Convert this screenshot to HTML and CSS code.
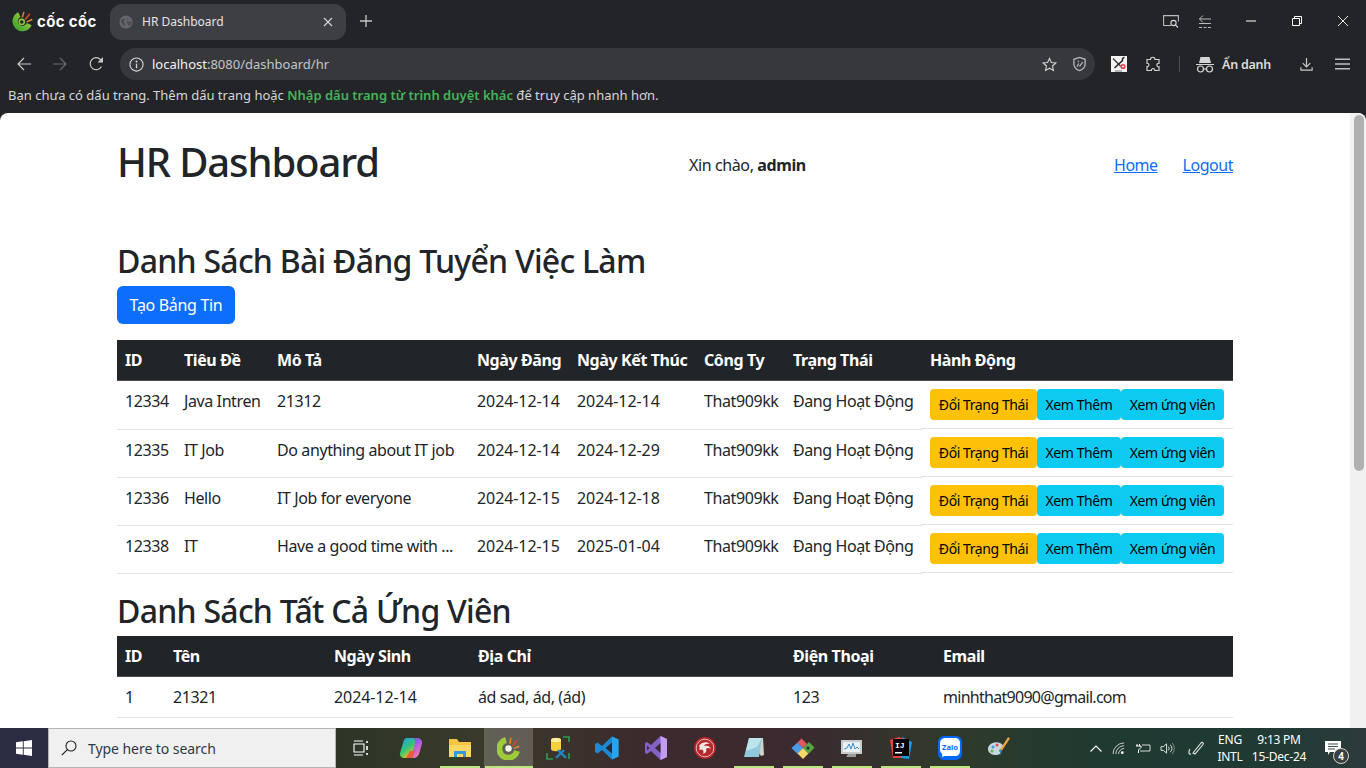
FILE: index.html
```html
<!DOCTYPE html>
<html lang="vi">
<head>
<meta charset="utf-8">
<title>HR Dashboard</title>
<link rel="stylesheet" href="styles.css">
</head>
<body>
<div class="browser">
  <div class="tabstrip">
    <div class="brand">
      <svg class="brand-logo" viewBox="0 0 20 20"><defs><linearGradient id="lg" x1="0" y1="1" x2="1" y2="0"><stop offset="0" stop-color="#3fa535"/><stop offset="1" stop-color="#a9cf38"/></linearGradient></defs><path d="M16.400 12.500A7 7 0 1 1 7 3.400" fill="none" stroke="url(#lg)" stroke-width="5"/><circle cx="9.300" cy="10.400" r="2.400" fill="none" stroke="#8cc63f" stroke-width="1.500"/><path d="M9 6 10.700.8l1.300.5L10.500 6.500z" fill="#e8792b"/><path d="M12 7.500 16.500 2.200l1 1-4.300 5.300z" fill="#d9472b"/><path d="M13.500 10 19 7.400l.6 1.300-5.500 2.300z" fill="#ef8a2c"/></svg>
      <span class="brand-name">cốc cốc</span>
    </div>
    <div class="tab">
      <svg class="tab-globe" viewBox="0 0 16 16"><circle cx="8" cy="8" r="7.500" fill="#65666a"/><path d="M3 4.500 6 4l1 2-2 2 2 2v3L5 12 2 8zM10 2l1 2.500-2 1 1 2 3-.5 1.500 1.500-1.500 3-2 1.500-.5-3-2-1 .5-2.500z" fill="#4c4d51"/></svg>
      <span class="tab-title">HR Dashboard</span>
      <svg class="tab-close" viewBox="0 0 10 10"><path d="M1 1l8 8M9 1l-8 8" stroke="#d5d6d8" stroke-width="1.100"/></svg>
    </div>
    <svg class="newtab" viewBox="0 0 12 12"><path d="M6 0v12M0 6h12" stroke="#c4c5c8" stroke-width="1.300"/></svg>
    <div class="spacer"></div>
    <svg class="win-a" viewBox="0 0 16 13"><path d="M8 10.500H.6V.6h14.800v6" fill="none" stroke="#b9babd" stroke-width="1.100"/><circle cx="10.500" cy="8" r="2.600" fill="none" stroke="#d8d9db" stroke-width="1.100"/><path d="M12.500 10 15 12.500" stroke="#d8d9db" stroke-width="1.100"/></svg>
    <svg class="win-b" viewBox="0 0 14 13"><path d="M13 4H1.500M5 .5 1.500 4 5 7.500" fill="none" stroke="#b9babd" stroke-width="1"/><path d="M1 8.500h12M1 12.500h3M5.500 12.500h3M10 12.500h3" stroke="#b9babd" stroke-width="1"/></svg>
    <svg class="win-min" viewBox="0 0 10 10"><path d="M0 5h10" stroke="#fff" stroke-width="1"/></svg>
    <svg class="win-max" viewBox="0 0 10 10"><path d="M.5 2.500h7v7h-7zM2.500 2.500v-2h7v7h-2" fill="none" stroke="#fff" stroke-width="1"/></svg>
    <svg class="win-close" viewBox="0 0 10 10"><path d="M0 0l10 10M10 0 0 10" stroke="#fff" stroke-width=".9"/></svg>
  </div>
  <div class="toolbar">
    <svg class="tb" viewBox="0 0 16 16"><path d="M15 8H2M8 2 2 8l6 6" fill="none" stroke="#c8c9cb" stroke-width="1.200"/></svg>
    <svg class="tb" viewBox="0 0 16 16"><path d="M1 8h13M8 2l6 6-6 6" fill="none" stroke="#6a6b6e" stroke-width="1.200"/></svg>
    <svg class="tb" viewBox="0 0 16 16"><path d="M13.500 10.500A6 6 0 1 1 12.500 3.500L14.500 5.500" fill="none" stroke="#c8c9cb" stroke-width="1.200"/><path d="M15 1v5.500H9.500z" fill="#c8c9cb"/></svg>
    <div class="omnibox">
      <svg class="omni-info" viewBox="0 0 16 16"><circle cx="8" cy="8" r="7" fill="none" stroke="#d5d6d8" stroke-width="1.200"/><path d="M8 7v5" stroke="#d5d6d8" stroke-width="1.400"/><circle cx="8" cy="4.800" r="1" fill="#d5d6d8"/></svg>
      <span class="url"><span class="url-host">localhost</span>:8080/dashboard/hr</span>
      <div class="spacer"></div>
      <svg class="omni-star" viewBox="0 0 16 16"><path d="M8 1.500l2 4.400 4.700.5-3.500 3.200 1 4.700L8 11.900l-4.200 2.400 1-4.700L1.300 6.400 6 5.900z" fill="none" stroke="#cfd0d2" stroke-width="1.200"/></svg>
      <svg class="omni-shield" viewBox="0 0 16 16"><path d="M8 1l6 2v5c0 3.500-2.500 5.800-6 7-3.500-1.200-6-3.500-6-7V3z" fill="none" stroke="#b4b5b8" stroke-width="1.400"/><path d="M5.500 11 7 7.500M8 10.500l3.500-4.500M7 6l-.5-1.500" stroke="#b4b5b8" stroke-width="1.300"/></svg>
    </div>
    <svg class="ext-tools" viewBox="0 0 16 16"><rect width="16" height="16" fill="#f4f4f4"/><path d="M2 2.500l7.500 7.500" stroke="#333" stroke-width="1.200"/><path d="M13.500 1.500c-1.500 0-2.500 1.500-2 3L3.500 12" stroke="#222" stroke-width="1.500" fill="none"/><circle cx="12" cy="10.500" r="2.600" fill="#e8384f"/><circle cx="12" cy="10.500" r="1" fill="#fff"/><path d="M4 15h7" stroke="#777" stroke-width="1"/></svg>
    <svg class="ext-puzzle" viewBox="0 0 16 16"><path d="M5.500 3.500C5.500 .5 10 .5 10 3.500h4v3.800c-2.800-.5-2.800 4 0 3.500v3.700H9.800c.5-2.400-3.900-2.400-3.400 0H2v-4c2.500.5 2.500-3.600 0-3.200V3.500z" fill="none" stroke="#cfd0d2" stroke-width="1.200"/></svg>
    <div class="tb-sep"></div>
    <svg class="incog" viewBox="0 0 18 18"><path d="M3 8l1.500-6h9L15 8zM0 9h18v1H0z" fill="#d4d5d7"/><circle cx="4.500" cy="14" r="3" fill="none" stroke="#d4d5d7" stroke-width="1.200"/><circle cx="13.500" cy="14" r="3" fill="none" stroke="#d4d5d7" stroke-width="1.200"/><path d="M7.500 14h3" stroke="#d4d5d7" stroke-width="1.200"/></svg>
    <span class="incog-label">Ẩn danh</span>
    <svg class="tb-dl" viewBox="0 0 16 16"><path d="M8 1v9M4 6.500 8 10.500l4-4" fill="none" stroke="#c8c9cb" stroke-width="1.300"/><path d="M2 11v3h12v-3" fill="none" stroke="#c8c9cb" stroke-width="1.200"/></svg>
    <svg class="tb-menu" viewBox="0 0 16 12"><path d="M0 1h16M0 6h16M0 11h16" stroke="#bdbec1" stroke-width="1.500"/></svg>
  </div>
  <div class="bookmarks">Bạn chưa có dấu trang. Thêm dấu trang hoặc <span class="bm-link">Nhập dấu trang từ trình duyệt khác</span> để truy cập nhanh hơn.</div>

  <div class="viewport">
    <main class="page">
      <header class="page-head">
        <h1>HR Dashboard</h1>
        <div class="greeting">Xin chào, <strong>admin</strong></div>
        <nav class="page-nav"><a href="#">Home</a><a href="#">Logout</a></nav>
      </header>

      <h2>Danh Sách Bài Đăng Tuyển Việc Làm</h2>
      <a class="btn btn-create" href="#">Tạo Bảng Tin</a>

      <table class="table jobs">
        <colgroup><col class="p1"><col class="p2"><col class="p3"><col class="p4"><col class="p5"><col class="p6"><col class="p7"><col class="p8"></colgroup>
        <thead><tr><th>ID</th><th>Tiêu Đề</th><th>Mô Tả</th><th>Ngày Đăng</th><th>Ngày Kết Thúc</th><th>Công Ty</th><th>Trạng Thái</th><th>Hành Động</th></tr></thead>
        <tbody>
          <tr><td>12334</td><td>Java Intren</td><td>21312</td><td>2024-12-14</td><td>2024-12-14</td><td>That909kk</td><td>Đang Hoạt Động</td><td class="actions"><a class="btn-sm warn" href="#">Đổi Trạng Thái</a><a class="btn-sm info more" href="#">Xem Thêm</a><a class="btn-sm info apps" href="#">Xem ứng viên</a></td></tr>
          <tr><td>12335</td><td>IT Job</td><td>Do anything about IT job</td><td>2024-12-14</td><td>2024-12-29</td><td>That909kk</td><td>Đang Hoạt Động</td><td class="actions"><a class="btn-sm warn" href="#">Đổi Trạng Thái</a><a class="btn-sm info more" href="#">Xem Thêm</a><a class="btn-sm info apps" href="#">Xem ứng viên</a></td></tr>
          <tr><td>12336</td><td>Hello</td><td>IT Job for everyone</td><td>2024-12-15</td><td>2024-12-18</td><td>That909kk</td><td>Đang Hoạt Động</td><td class="actions"><a class="btn-sm warn" href="#">Đổi Trạng Thái</a><a class="btn-sm info more" href="#">Xem Thêm</a><a class="btn-sm info apps" href="#">Xem ứng viên</a></td></tr>
          <tr><td>12338</td><td>IT</td><td>Have a good time with ...</td><td>2024-12-15</td><td>2025-01-04</td><td>That909kk</td><td>Đang Hoạt Động</td><td class="actions"><a class="btn-sm warn" href="#">Đổi Trạng Thái</a><a class="btn-sm info more" href="#">Xem Thêm</a><a class="btn-sm info apps" href="#">Xem ứng viên</a></td></tr>
        </tbody>
      </table>

      <h2>Danh Sách Tất Cả Ứng Viên</h2>
      <table class="table cand">
        <colgroup><col class="c1"><col class="c2"><col class="c3"><col class="c4"><col class="c5"><col class="c6"></colgroup>
        <thead><tr><th>ID</th><th>Tên</th><th>Ngày Sinh</th><th>Địa Chỉ</th><th>Điện Thoại</th><th>Email</th></tr></thead>
        <tbody><tr><td>1</td><td>21321</td><td>2024-12-14</td><td>ád sad, ád, (ád)</td><td>123</td><td>minhthat9090@gmail.com</td></tr></tbody>
      </table>
    </main>
    <div class="scrollbar"><div class="thumb"></div></div>
  </div>

  <footer class="taskbar">
    <div class="start"><svg class="win-logo" viewBox="0 0 16 16"><path d="M0 2.300 6.800 1.300V7.500H0zM7.700 1.200 16 0V7.500H7.700zM0 8.400H6.800V14.700L0 13.700zM7.700 8.400H16V16L7.700 14.800z" fill="#fff"/></svg></div>
    <div class="search">
      <svg class="search-ico" viewBox="0 0 16 16"><circle cx="10" cy="6" r="5" fill="none" stroke="#222" stroke-width="1.100"/><path d="M6.300 9.700 .8 15.200" stroke="#222" stroke-width="1.200"/></svg>
      <span>Type here to search</span>
    </div>
    <div class="task"><svg class="ti-s" viewBox="0 0 16 16"><path d="M1 1h9M1 15h9M1 4h10v8H1z" fill="none" stroke="#fff" stroke-width="1.100"/><path d="M14 1v2M14 6v4M14 13v2" stroke="#fff" stroke-width="1.600"/></svg></div>
    <div class="task copilot"><svg class="ti" viewBox="0 0 24 24"><defs><linearGradient id="cp1" x1="0" y1="0" x2=".6" y2="1"><stop offset="0" stop-color="#1c9fe8"/><stop offset=".55" stop-color="#32c47a"/><stop offset="1" stop-color="#f7c51c"/></linearGradient><linearGradient id="cp2" x1="0" y1="0" x2=".6" y2="1"><stop offset="0" stop-color="#2f5fe8"/><stop offset=".55" stop-color="#b45de2"/><stop offset="1" stop-color="#f577a8"/></linearGradient></defs><path d="M8 2h7c1.500 0 2.500 1 2.500 2.500L13 19c-.6 2-2.500 3-4 3H5.500C2 22 .5 19.500 1 17L4.500 5.500C5 3.500 6 2 8 2z" fill="url(#cp1)"/><path d="M13.500 2h4.500c3.500 0 5.500 2.500 5 5.500l-2.500 9c-.7 3-3 5.500-5.500 5.500H9c2 0 3.500-1 4.200-3l3-12C16.700 5 16 2.800 13.500 2z" fill="url(#cp2)"/><path d="M7 22h6.500l2-7H11z" fill="#ee5a3a"/></svg></div>
    <div class="task mark"><svg class="ti" viewBox="0 0 24 24"><path d="M1 3h8l2 3h12v15H1z" fill="#f6c544"/><path d="M1 9h22v12H1z" fill="#fbd766"/><path d="M6 21v-6h12v6h-3v-3H9v3z" fill="#2f9be0"/></svg></div>
    <div class="task active mark"><svg class="ti" viewBox="0 0 24 24"><path d="M20 15A9 9 0 1 1 9 4" fill="none" stroke="#9ccc3c" stroke-width="6"/><circle cx="11.500" cy="12.500" r="3.200" fill="#f2f6ea"/><path d="M12 7.500 13 1.500h1.500L14 8z" fill="#e8792b"/><path d="M15 9.500 19.500 4l1 1.200-4 5z" fill="#d9472b"/><path d="M16.500 12 22 9.500l.5 1.500-5.500 2z" fill="#ef8a2c"/></svg></div>
    <div class="task"><svg class="ti" viewBox="0 0 24 24"><path d="M5 4c0-3 10-3 10 0v9c0 3-10 3-10 0z" fill="#f5d23a"/><ellipse cx="10" cy="4" rx="5" ry="2" fill="#fdf0a0"/><path d="M17 1h6v5M1 17v6h6M23 17v6" fill="none" stroke="#2e9d4c" stroke-width="1.600"/><path d="M10 22l8-8M12 14l8 8" stroke="#1f86c9" stroke-width="2.400"/></svg></div>
    <div class="task"><svg class="ti" viewBox="0 0 24 24"><path d="M17 0.500 23.500 3.500v17L17 23.500 7 14 2.500 17.500 0 16V8l2.500-1.500L7 10z" fill="#1a8ad4"/><path d="M17 .5 23.500 3.500v17L17 23.500z" fill="#27a4ee"/><path d="M17 6.500 10.500 12l6.500 5.500z" fill="#2a2a30"/></svg></div>
    <div class="task"><svg class="ti" viewBox="0 0 24 24"><path d="M16.500 0 23 3v18l-6.500 3L7 15l-4 3-2-1V7l2-1 4 3z" fill="#8661c5"/><path d="M16.500 0 23 3v18l-6.500 3z" fill="#c39bf0"/><path d="M16.500 7 11 12l5.500 5z" fill="#3a2a34"/><path d="M3 9.500v5L5.500 12z" fill="#3a2a34"/></svg></div>
    <div class="task"><svg class="ti" viewBox="0 0 24 24"><circle cx="12" cy="12" r="11" fill="#b3272d"/><circle cx="12" cy="12" r="8.800" fill="none" stroke="#e7c9c4" stroke-width=".9"/><path d="M6 10c2-4 8-5 11-2-3-.8-5 0-6 2 3-1 6 0 7 3-2-1.500-4-1.500-5 0 1 2 0 4-3 5 1-2 .5-3.500-1-4.500-1 .5-2.500.5-3-.5 1-.5 1-1.500 0-3z" fill="#f5e6e2"/></svg></div>
    <div class="task mark"><svg class="ti" viewBox="0 0 24 24"><path d="M7 2h14l1 17-3 1z" fill="#cfd3c8"/><path d="M7 2h13l-3 19-15 0z" fill="#8ec9dc"/><path d="M7 2h13l-5 9-11 4z" fill="#bfe3ea"/></svg></div>
    <div class="task mark"><svg class="ti" viewBox="0 0 24 24"><path d="M12 12 6.500 6.500l4-4 5.500 5.500z" fill="#e2585f"/><path d="M12 12l6-6 5.500 5.500-5.500 6z" fill="#54a943"/><path d="M12 12l-5.500-5.500-6 5.500 6 6z" fill="#4d9be8"/><path d="M12 12l5.500 5.500L12 23l-5.500-5.500z" fill="#f5d76a"/><circle cx="17" cy="12" r="1.500" fill="#2a2a2a"/></svg></div>
    <div class="task mark"><svg class="ti" viewBox="0 0 24 24"><path d="M1 4h21v14H1z" fill="#c8c9c9"/><path d="M3 6h17v10H3z" fill="#e8f0f6"/><path d="M4 13l3-1 2-4 2 5 2-6 2 6 2-2 2 2" fill="none" stroke="#3f8fc9" stroke-width="1"/><path d="M8 18h8v3H6z" fill="#9a9b9b"/></svg></div>
    <div class="task mark"><svg class="ti" viewBox="0 0 24 24"><path d="M1 4l9-3 7 3-4 18H4z" fill="#f0433c"/><path d="M13 1l10 5-3 17-8-1z" fill="#1e9ae0"/><path d="M4 3h16v17H4z" fill="#000"/><text class="ij" x="6" y="12">IJ</text><path d="M6 16h7v1.500H6z" fill="#fff"/></svg></div>
    <div class="task mark"><svg class="ti" viewBox="0 0 24 24"><path d="M7 0h10c5 0 7 3 7 7v10c0 4-2 7-7 7H7c-5 0-7-3-7-7V7c0-4 2-7 7-7z" fill="#0068ff"/><path d="M8 2h9c3 0 5 2 5 5v8c0 3-2 5-5 5H8c-2 0-3 .5-4 1 .5-1 .5-2 0-3C2.500 16.500 2 15 2 13V7c0-3 2-5 6-5z" fill="#fff"/><text class="zalo" x="12" y="13.500">Zalo</text></svg></div>
    <div class="task"><svg class="ti" viewBox="0 0 24 24"><path d="M1 13c0-5 7-8 12-6 4 1.500 4 5 1 6-2 .5-2 2-1 3 1 2-1 3-4 3-4 0-8-2-8-6z" fill="#c8d6de"/><circle cx="6" cy="11" r="1.500" fill="#3ca0d8"/><circle cx="10" cy="9" r="1.500" fill="#e0504c"/><circle cx="5" cy="15" r="1.500" fill="#6ab04c"/><path d="M21 1l2 1.500-8 12-2-1z" fill="#e8a33a"/><path d="M13 13.500l2 1-2 5z" fill="#3c88c0"/></svg></div>
    <div class="spacer"></div>
    <svg class="tray-caret" viewBox="0 0 12 7"><path d="M.5 6.500 6 1l5.500 5.500" fill="none" stroke="#fff" stroke-width="1.100"/></svg>
    <svg class="tray-net" viewBox="0 0 16 14"><path d="M1 13A12 12 0 0 1 13 1M4 13a9 9 0 0 1 9-9M7 13a6 6 0 0 1 6-6" fill="none" stroke="#cfd3d0" stroke-width="1"/><circle cx="11" cy="11.500" r="1.500" fill="#fff"/></svg>
    <svg class="tray-pow" viewBox="0 0 16 10"><path d="M2 1v2M4.500 1v2M1 3h5v1.500L3.500 7v3" fill="none" stroke="#fff" stroke-width="1"/><path d="M7 2h8v6H5" fill="none" stroke="#d6d9d6" stroke-width="1"/></svg>
    <svg class="tray-vol" viewBox="0 0 16 14"><path d="M1 5h2.500L7 2v10L3.500 9H1z" fill="none" stroke="#e8eae8" stroke-width="1"/><path d="M9 5a3 3 0 0 1 0 4M11 3a6 6 0 0 1 0 8" fill="none" stroke="#e8eae8" stroke-width="1"/><path d="M13 1a9 9 0 0 1 0 12" fill="none" stroke="#8a8f8c" stroke-width="1"/></svg>
    <svg class="tray-pen" viewBox="0 0 16 16"><path d="M5 13 13 3c1-1.500 3 0 2 1.500L7 14zM2 9c-2 3-1 6 1 5" fill="none" stroke="#e8eae8" stroke-width="1.100"/></svg>
    <div class="lang"><span>ENG</span><span>INTL</span></div>
    <div class="clock"><span>9:13 PM</span><span>15-Dec-24</span></div>
    <div class="notif">
      <svg class="notif-ico" viewBox="0 0 16 16"><path d="M0 1h16v11H5l-2 3v-3H0z" fill="#fff"/><path d="M3 4h10M3 6.500h10M3 9h7" stroke="#3a4a45" stroke-width="1"/></svg>
      <span class="notif-badge">4</span>
    </div>
  </footer>
</div>
</body>
</html>
```

FILE: styles.css
```css
* { box-sizing: border-box; }
html, body { margin: 0; padding: 0; height: 100%; overflow: hidden; }
body { font-family: "Noto Sans", "Open Sans", sans-serif; color: #212529; background: #232427; }
svg { display: block; flex: none; }
.browser { display: flex; flex-direction: column; height: 768px; width: 1366px; }
.spacer { flex: 1; }

/* tab strip */
.tabstrip { height: 40px; display: flex; align-items: center; padding-left: 12px; padding-top: 2px; flex: none; }
.brand { width: 98px; display: flex; align-items: center; gap: 4px; margin-top: 1px; }
.brand-logo { width: 21px; height: 21px; }
.brand-name { font-family: "Inter", sans-serif; font-weight: 700; font-size: 15px; color: #fff; letter-spacing: .35px; white-space: nowrap; }
.tab { width: 236px; height: 36px; background: #3e3f44; border-radius: 12px; display: flex; align-items: center; padding-left: 9px; margin-top: 1px; }
.tab-globe { width: 14px; height: 14px; }
.tab-title { font-size: 12px; color: #e3e4e6; margin-left: 9px; flex: 1; }
.tab-close { width: 10px; height: 10px; margin-right: 13px; }
.newtab { width: 12px; height: 12px; margin-left: 14px; }
.win-a { width: 16px; height: 13px; margin-right: 19px; }
.win-b { width: 14px; height: 13px; margin-right: 34px; }
.win-min, .win-max, .win-close { width: 10px; height: 10px; }
.win-max { margin-left: 36px; }
.win-close { margin-left: 36px; margin-right: 18px; }

/* toolbar */
.toolbar { height: 48px; flex: none; display: flex; align-items: center; padding-left: 16px; }
.tb { width: 16px; height: 16px; margin-right: 20px; }
.omnibox { width: 975px; height: 32px; margin-left: -4px; background: #37383c; border-radius: 16px; display: flex; align-items: center; padding-left: 9px; }
.omni-info { width: 15px; height: 15px; }
.url { font-size: 13px; color: #c4c5c8; margin-left: 8px; }
.url-host { color: #f1f1f2; }
.omni-star { width: 15px; height: 15px; margin-right: 15px; }
.omni-shield { width: 15px; height: 16px; margin-right: 8px; }
.ext-tools { width: 16px; height: 16px; margin-left: 16px; }
.ext-puzzle { width: 16px; height: 16px; margin-left: 18px; }
.tb-sep { width: 1px; height: 16px; background: #4b4c50; margin-left: 18px; }
.incog { width: 18px; height: 18px; margin-left: 16px; }
.incog-label { font-size: 12.500px; font-weight: 600; color: #dcdddf; margin-left: 8px; width: 50px; white-space: nowrap; letter-spacing: -.02em; }
.tb-dl { width: 15px; height: 15px; margin-left: 27px; }
.tb-menu { width: 15px; height: 12px; margin-left: 21px; }

/* bookmarks */
.bookmarks { height: 25px; flex: none; font-size: 13px; line-height: 15px; color: #d6d7d9; padding-left: 8px; }
.bm-link { color: #46b35a; font-weight: 600; }

/* page */
.viewport { flex: 1; min-height: 0; display: flex; background: #fff; border-radius: 8px 8px 0 0; overflow: hidden; }
.page { width: 1350px; flex: none; padding: 25px 117px 0; height: 100%; overflow: hidden; }
.scrollbar { flex: 1; background: #f1f1f1; padding: 2px 2px 0 4px; }
.thumb { height: 356px; background: #b0b0b0; border-radius: 5px; }
.page-head { display: flex; align-items: center; justify-content: space-between; margin-bottom: 47px; }
h1 { margin: 0 0 8px; font-size: 40px; line-height: 48px; font-weight: 500; letter-spacing: -.028em; }
h2 { margin: 0 0 5.600px; padding-top: 1px; font-size: 32px; line-height: 38.400px; font-weight: 500; letter-spacing: -.023em; }
.greeting { font-size: 16px; letter-spacing: -.025em; margin-left: 2px; padding-bottom: 2px; }
.greeting strong { font-weight: 700; }
.page-nav { display: flex; gap: 25px; font-size: 16px; letter-spacing: -.03em; padding-bottom: 2px; }
.page-nav a { color: #0d6efd; text-decoration: underline; }
.btn { display: flex; align-items: center; justify-content: center; text-decoration: none; }
.btn-create { width: 118px; height: 38px; background: #0d6efd; color: #fff; border-radius: 6px; font-size: 16px; letter-spacing: -.02em; }

.table { width: 1116px; table-layout: fixed; border-collapse: collapse; margin: 16px 0 17px; font-size: 16px; line-height: 24px; letter-spacing: -.025em; }
h2 + .table { margin-top: 0; }
th, td { padding: 8px; text-align: left; vertical-align: top; white-space: nowrap; border-bottom: 1px solid #dee2e6; overflow: hidden; }
th { background: #212529; color: #fff; font-weight: 700; border-bottom-color: #4d5154; }
.jobs td:nth-child(4), .jobs td:nth-child(5), .cand td:nth-child(3) { letter-spacing: -.005em; }
.cand td:nth-child(6) { letter-spacing: -.045em; }
.p1 { width: 59px; } .p2 { width: 93px; } .p3 { width: 200px; } .p4 { width: 100px; }
.p5 { width: 127px; } .p6 { width: 89px; } .p7 { width: 137px; } .p8 { width: 311px; }
.c1 { width: 48px; } .c2 { width: 161px; } .c3 { width: 144px; } .c4 { width: 315px; } .c5 { width: 150px; } .c6 { width: 298px; }
.actions { display: flex; }
.btn-sm { width: 107px; height: 31px; display: flex; align-items: center; justify-content: center; border-radius: 4px; color: #000; text-decoration: none; font-size: 14px; line-height: 21px; letter-spacing: -.03em; }
.warn { background: #ffc107; }
.info { background: #0dcaf0; }
.more { width: 84px; }
.apps { width: 103px; }

/* taskbar */
.taskbar { height: 40px; flex: none; display: flex; align-items: center; background: linear-gradient(90deg, #2c2c44 0, #2c2c42 48px, #2d3627 350px, #3a3a2b 480px, #3c2a2d 650px, #3b2a2f 800px, #2f3a2b 950px, #1f3a31 1100px, #1e3a33 1250px, #2b3b3a 1366px); }
.start { width: 48px; height: 40px; display: flex; align-items: center; justify-content: center; }
.win-logo { width: 16px; height: 16px; }
.search { width: 288px; height: 40px; background: #f0f0f0; border: 1px solid #b5b5b5; display: flex; align-items: center; padding-left: 12px; font-size: 14px; letter-spacing: -.004em; }
.search-ico { width: 16px; height: 16px; margin-right: 11px; }
.search span { color: #2d3a45; }
.task { width: 49px; height: 40px; display: flex; align-items: center; justify-content: center; flex: none; }
.copilot { margin-left: 1px; }
.ti { width: 24px; height: 24px; }
.ti-s { width: 16px; height: 16px; }
.active { background-color: rgba(255, 255, 255, .2); }
.mark { background-image: linear-gradient(#b9e67e, #b9e67e); background-size: 40px 2px; background-position: center bottom; background-repeat: no-repeat; }
.task.active { background-size: 48px 2px; }
.ij { font-family: "Liberation Mono", monospace; font-size: 8px; font-weight: 700; fill: #fff; }
.zalo { font-family: "Noto Sans", sans-serif; font-size: 7.500px; font-weight: 700; fill: #0068ff; text-anchor: middle; }
.tray-caret { width: 12px; height: 7px; margin-right: 10px; }
.tray-net { width: 15px; height: 13px; margin-right: 8px; }
.tray-pow { width: 16px; height: 10px; margin-right: 9px; }
.tray-vol { width: 15px; height: 13px; margin-right: 13px; }
.tray-pen { width: 16px; height: 16px; margin-right: 11px; }
.lang, .clock { display: flex; flex-direction: column; align-items: center; font-size: 12px; line-height: 17px; color: #fff; letter-spacing: -.02em; white-space: nowrap; }
.lang { width: 30px; margin-right: 6px; }
.clock { width: 56px; margin-right: 13px; }
.notif { position: relative; width: 46px; height: 40px; display: flex; align-items: center; padding-left: 5px; flex: none; }
.notif-ico { width: 16px; height: 16px; }
.notif-badge { position: absolute; left: 13px; top: 20px; width: 16px; height: 16px; border-radius: 50%; background: #3b3f3e; border: 1px solid #d4d4d4; color: #fff; font-size: 10px; font-weight: 700; line-height: 14px; text-align: center; }
```
